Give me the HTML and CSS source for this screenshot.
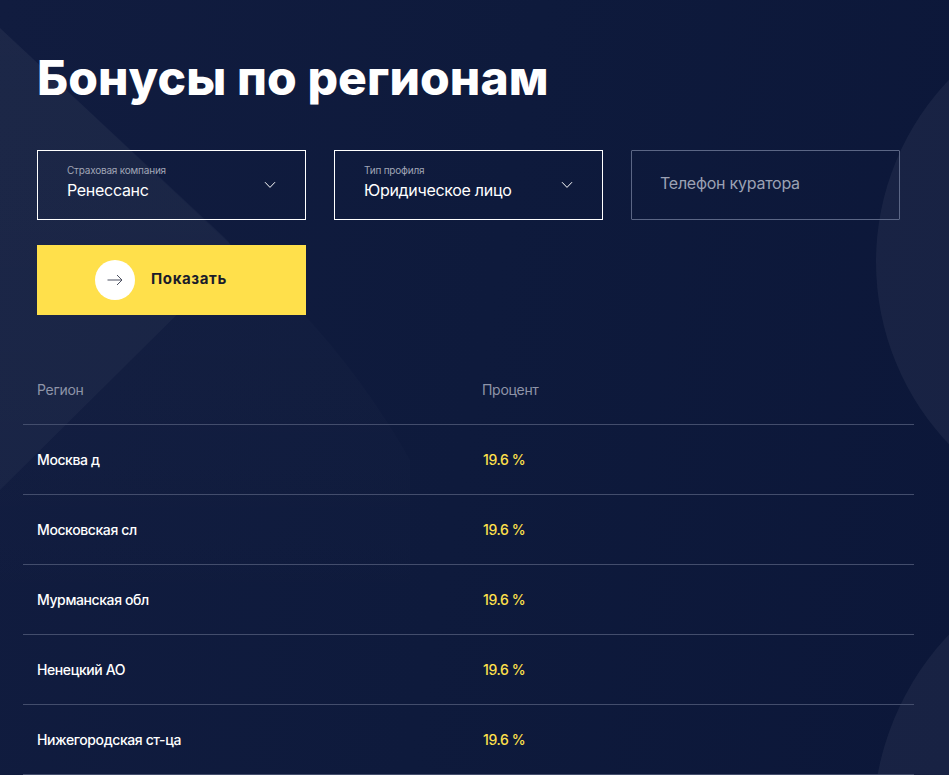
FILE: index.html
```html
<!DOCTYPE html>
<html lang="ru">
<head>
<meta charset="utf-8">
<title>Бонусы по регионам</title>
<link rel="stylesheet" href="styles.css">
</head>
<body>
<main class="page">
  <svg class="bg" width="949" height="775" viewBox="0 0 949 775" aria-hidden="true">
    <defs>
      <linearGradient id="fade" gradientUnits="userSpaceOnUse" x1="0" y1="0" x2="0" y2="620">
        <stop offset="0" stop-color="#fff" stop-opacity="0.02"/>
        <stop offset="0.65" stop-color="#fff" stop-opacity="0.012"/>
        <stop offset="1" stop-color="#fff" stop-opacity="0"/>
      </linearGradient>
    </defs>
    <path fill="url(#fade)" d="M0 28 L300 310 Q365 380 410 460 L410 620 L0 620 Z"/>
    <path class="bg-band" d="M0 28 L225 238 Q240 252 226 266 L0 490 Z"/>
    <circle class="bg-shape" cx="1140" cy="262" r="264"/>
    <circle class="bg-shape" cx="1150" cy="825" r="277"/>
  </svg>
  <div class="content">
    <h1 class="title">Бонусы по регионам</h1>
    <div class="filters">
      <div class="field field-select">
        <div class="field-text">
          <span class="field-label">Страховая компания</span>
          <span class="field-value">Ренессанс</span>
        </div>
        <svg class="chevron" width="12" height="8" viewBox="0 0 12 8"><path d="M1 1.2 L6 6.4 L11 1.2"/></svg>
      </div>
      <div class="field field-select">
        <div class="field-text">
          <span class="field-label">Тип профиля</span>
          <span class="field-value">Юридическое лицо</span>
        </div>
        <svg class="chevron" width="12" height="8" viewBox="0 0 12 8"><path d="M1 1.2 L6 6.4 L11 1.2"/></svg>
      </div>
      <div class="field field-input">Телефон куратора</div>
    </div>
    <button class="show-btn" type="button">
      <span class="show-icon">
        <svg width="16" height="12" viewBox="0 0 16 12"><path d="M0.5 6 H15 M10 1 L15 6 L10 11"/></svg>
      </span>
      <span class="show-text">Показать</span>
    </button>
    <div class="table">
      <div class="row row-head"><span class="col-region">Регион</span><span class="col-pct">Процент</span></div>
      <div class="row"><span class="col-region">Москва д</span><span class="col-pct">19.6 %</span></div>
      <div class="row"><span class="col-region">Московская сл</span><span class="col-pct">19.6 %</span></div>
      <div class="row"><span class="col-region">Мурманская обл</span><span class="col-pct">19.6 %</span></div>
      <div class="row"><span class="col-region">Ненецкий АО</span><span class="col-pct">19.6 %</span></div>
      <div class="row"><span class="col-region">Нижегородская ст-ца</span><span class="col-pct">19.6 %</span></div>
    </div>
  </div>
</main>
</body>
</html>
```

FILE: styles.css
```css
* { box-sizing: border-box; }
html, body { margin: 0; height: 100%; }
body {
  background: #0c1739;
  font-family: Inter, "Liberation Sans", sans-serif;
  overflow: hidden;
}
.page {
  position: relative;
  width: 949px;
  height: 775px;
  overflow: hidden;
  background: linear-gradient(100deg, #111c3f 0%, #0e1a3c 50%, #0c1739 100%);
}
.bg { position: absolute; inset: 0; }
.bg-shape { fill: #ffffff; fill-opacity: 0.05; }
.bg-band { fill: #ffffff; fill-opacity: 0.03; }
.content {
  position: relative;
  padding: 48px 35px 0 23px;
}
.title {
  margin: 0 0 42px 14px;
  font-size: 48px;
  line-height: 60px;
  font-weight: 800;
  letter-spacing: 0.1px;
  color: #fff;
}
.filters {
  display: flex;
  gap: 28px;
  margin-left: 14px;
}
.field {
  width: 269px;
  height: 70px;
}
.field-select {
  display: flex;
  align-items: center;
  justify-content: space-between;
  padding: 0 29px 0 29px;
  border: 1px solid #fff;
}
.field-text {
  display: flex;
  flex-direction: column;
  margin-bottom: 8px;
}
.field-label {
  font-size: 10px;
  line-height: 14px;
  color: #a0a5b6;
  letter-spacing: -0.2px;
}
.field-value {
  margin-top: 3px;
  font-size: 16px;
  line-height: 20px;
  color: #fff;
  letter-spacing: -0.3px;
}
.chevron { fill: none; stroke: #fff; stroke-width: 1; margin-bottom: 1px; }
.field-input {
  display: flex;
  align-items: center;
  padding: 0 28px 5px;
  border: 1px solid #5b6685;
  border-radius: 1px;
  font-size: 16px;
  color: #9ba1b4;
  letter-spacing: -0.25px;
}
.show-btn {
  display: flex;
  align-items: center;
  gap: 16px;
  width: 269px;
  height: 70px;
  margin: 25px 0 0 14px;
  padding: 0 0 0 58px;
  border: 0;
  background: #ffe04b;
  font: 700 15px Inter, "Liberation Sans", sans-serif;
  letter-spacing: 0.62px;
  color: #1a1c2a;
}
.show-text { margin-bottom: 3px; }
.show-icon {
  display: flex;
  align-items: center;
  justify-content: center;
  width: 40px;
  height: 40px;
  border-radius: 50%;
  background: #fff;
}
.show-icon svg { fill: none; stroke: #4b4f60; stroke-width: 1; }
.table { margin-top: 40px; }
.row {
  display: flex;
  align-items: center;
  height: 70px;
  padding: 0 0 0 14px;
  border-bottom: 1px solid #434d6c;
  font-size: 14px;
  font-weight: 500;
  letter-spacing: -0.4px;
  color: #fff;
}
.row-head { color: #8e94a8; font-weight: 400; letter-spacing: -0.3px; padding-bottom: 1px; }
.col-region { width: 446px; }
.col-pct { color: #ffe04b; }
.row-head .col-pct { color: #8e94a8; margin-left: -1px; }
```
